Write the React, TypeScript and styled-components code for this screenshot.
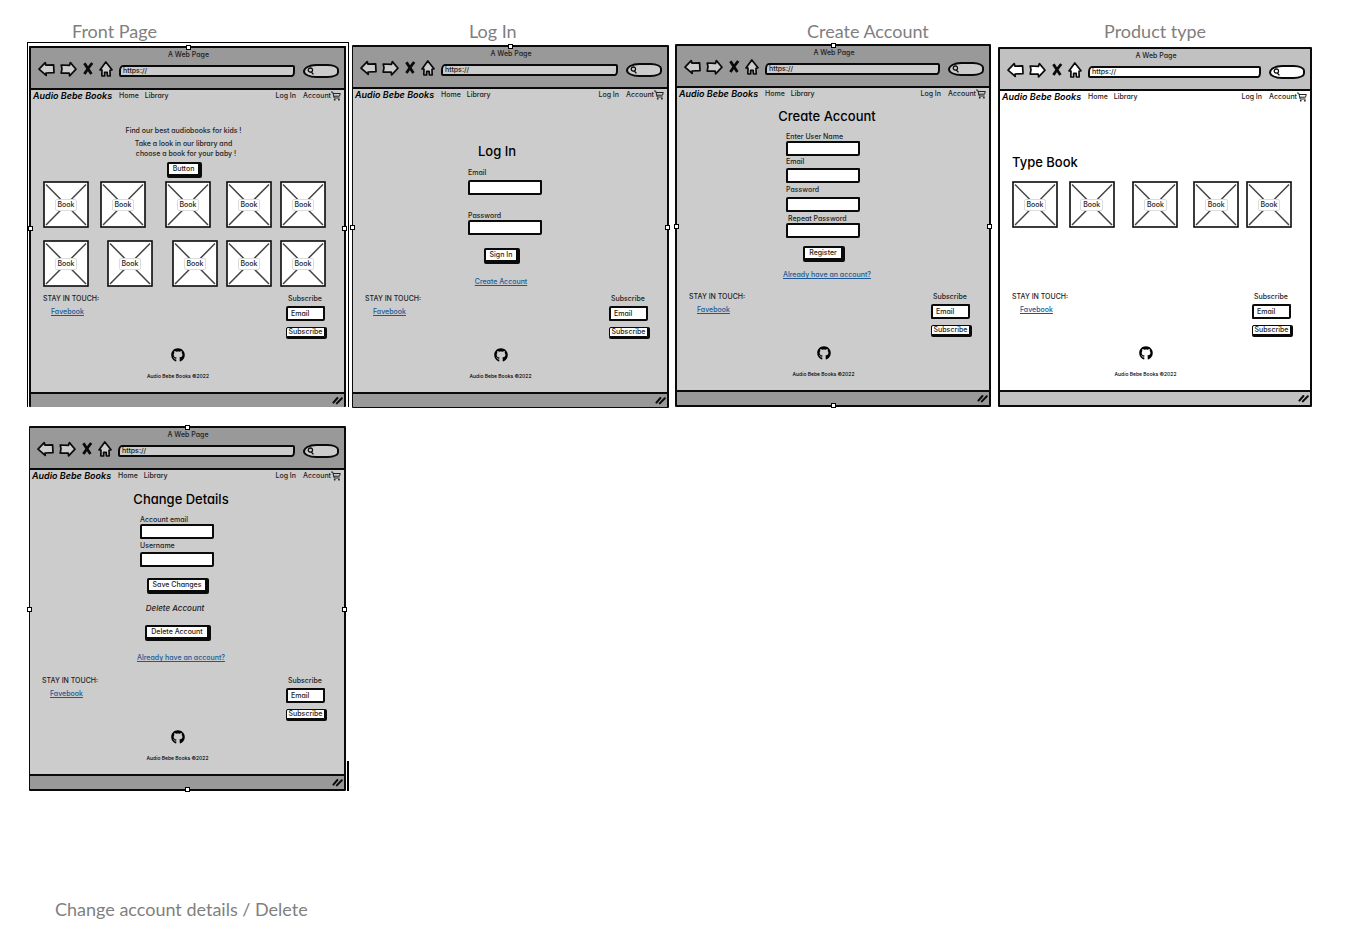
import React, { useId } from "react";
import styled, { createGlobalStyle } from "styled-components";
import { FaGithub } from "react-icons/fa";

const GlobalStyle = createGlobalStyle`
  * { box-sizing: border-box; }
  body { margin: 0; background: #fff; }
  h1, h2, h3, p { margin: 0; font-weight: inherit; }
  a { color: inherit; text-decoration: none; }
  button, input { font: inherit; color: inherit; margin: 0; }
`;

const Board = styled.main`
  display: grid;
  grid-template-columns: 325fr 323fr 323fr 314fr;
  padding: 21px 45px 0 27px;
`;

const Cell = styled.section<{ $right: number; $left?: number }>`
  padding: 0 ${(p) => p.$right}px 0 ${(p) => p.$left ?? 0}px;
`;

const Caption = styled.h2<{ $indent: number; $gap?: number }>`
  padding-left: ${(p) => p.$indent}px;
  margin-bottom: ${(p) => p.$gap ?? 0}px;
  font: 400 18px/20px Lato, "Open Sans", sans-serif;
  color: #7f7f7f;
  white-space: nowrap;
`;

const OuterFrame = styled.div`
  border: solid #000;
  border-width: 1px 1px 0 1px;
  padding: 3px 2px 0 1px;
`;

const Frame = styled.article<{ $light?: boolean; $top: number; $bottom: number; $side: number }>`
  position: relative;
  border: solid #0a0a0a;
  border-width: ${(p) => `${p.$top}px 2px ${p.$bottom}px ${p.$side}px`};
  border-radius: 1px;
  background: ${(p) => (p.$light ? "#fff" : "#ccc")};
  color: #1c1c1c;
  font: 500 7px/10px Inter, sans-serif;
  font-feature-settings: "cv11";
  --bar: ${(p) => (p.$light ? "#c1c1c1" : "#999")};
  --control: ${(p) => (p.$light ? "#fff" : "#ccc")};
`;

const Handle = styled.i<{ $at: "top" | "bottom" | "left" | "right" }>`
  position: absolute;
  width: 5px;
  height: 5px;
  border: 1px solid #000;
  background: #fff;
  ${(p) =>
    ({
      top: "top: -3px; left: calc(50% - 2px);",
      bottom: "bottom: -3px; left: calc(50% - 2px);",
      left: "left: -3px; top: calc(50% - 2px);",
      right: "right: -3px; top: calc(50% - 2px);",
    })[p.$at]}
`;

const Chrome = styled.header`
  background: var(--bar);
  border-bottom: 2px solid #0a0a0a;
  padding: 2px 5px 8px 7px;
`;

const ChromeTitle = styled.h3`
  font-size: 7px;
  line-height: 10px;
  text-align: center;
`;

const ToolRow = styled.div`
  display: flex;
  align-items: center;
  height: 20px;
  padding-top: 2px;
`;

const ToolIcons = styled.div`
  display: flex;
  align-items: center;
  gap: 5px;
  padding-bottom: 5px;
  margin-right: 6px;
`;

const IconButton = styled.button`
  display: flex;
  padding: 0;
  border: 0;
  background: none;
`;

const AddressInput = styled.input`
  flex: 1;
  min-width: 0;
  height: 12px;
  padding: 0 2px 1px;
  border: 2px solid #0a0a0a;
  border-radius: 4px 2px 3px 2px / 6px 2px 5px 2px;
  background: var(--control);
  outline: none;
`;

const SearchPill = styled.label`
  display: flex;
  align-items: center;
  width: 36px;
  height: 14px;
  margin-left: 8px;
  padding-left: 1px;
  border: 2px solid #0a0a0a;
  border-radius: 14px 12px 12px 14px / 8px 6px 6px 7px;
  background: var(--control);
`;

const SearchInput = styled.input`
  width: 20px;
  height: 8px;
  padding: 0;
  border: 0;
  background: none;
  outline: none;
`;

const Page = styled.div<{ $height: number }>`
  display: flex;
  flex-direction: column;
  min-height: ${(p) => p.$height}px;
`;

const Nav = styled.nav`
  display: flex;
  align-items: center;
  height: 12px;
  padding: 0 3px 0 2px;
`;

const Brand = styled.a`
  width: 86px;
  color: #000;
  font-size: 9px;
  font-style: italic;
  font-weight: 600;
  white-space: nowrap;
`;

const NavLink = styled.a<{ $gap?: number }>`
  margin-right: ${(p) => p.$gap ?? 0}px;
`;

const NavEnd = styled.div`
  display: flex;
  align-items: center;
  margin-left: auto;
`;

const Stack = styled.form<{ $right: number }>`
  display: flex;
  flex-direction: column;
  align-items: center;
  padding-right: ${(p) => p.$right}px;
`;

const Line = styled.p<{ $top?: number; $left?: number }>`
  margin-top: ${(p) => p.$top ?? 0}px;
  padding-left: ${(p) => p.$left ?? 0}px;
  white-space: nowrap;
`;

const Heading = styled.h1<{ $top: number; $left?: number; $right?: number }>`
  margin: ${(p) => `${p.$top}px ${p.$right ?? 0}px 0 ${p.$left ?? 0}px`};
  font-size: 13px;
  line-height: 18px;
  color: #000;
`;

const SubHeading = styled.h2`
  margin-top: 11px;
  margin-right: 4px;
  font-size: 8px;
  line-height: 10px;
  font-style: italic;
`;

const FieldBox = styled.div<{ $top: number; $gap: number; $left?: number; $indent?: number }>`
  display: flex;
  flex-direction: column;
  gap: ${(p) => p.$gap}px;
  width: 74px;
  margin-top: ${(p) => p.$top}px;
  margin-left: ${(p) => p.$left ?? 0}px;
  label {
    padding-left: ${(p) => p.$indent ?? 0}px;
    line-height: 8px;
    white-space: nowrap;
  }
`;

const TextInput = styled.input`
  width: 100%;
  height: 15px;
  padding: 0 3px;
  border: 2px solid #0a0a0a;
  border-radius: 2px 1px 2px 1px;
  background: #fff;
  outline: none;
  &::placeholder { color: #222; opacity: 1; }
`;

const PushButton = styled.button<{ $top?: number; $small?: boolean }>`
  height: ${(p) => (p.$small ? 10 : 14)}px;
  margin-top: ${(p) => p.$top ?? 0}px;
  padding: ${(p) => (p.$small ? "0" : "0 4px")};
  border: ${(p) => (p.$small ? "1px" : "2px")} solid #0a0a0a;
  border-radius: 2px 1px 1px 1px;
  box-shadow: 1px 1px 0 1px #0a0a0a;
  background: #fff;
  line-height: ${(p) => (p.$small ? 8 : 10)}px;
  white-space: nowrap;
`;

const TextLink = styled.a<{ $top?: number; $left?: number }>`
  margin-top: ${(p) => p.$top ?? 0}px;
  margin-left: ${(p) => p.$left ?? 0}px;
  color: #1b5a96;
  text-decoration: underline;
  white-space: nowrap;
`;

const Shelf = styled.div<{ $columns: string; $top: number }>`
  display: grid;
  grid-template-columns: ${(p) => p.$columns};
  margin-top: ${(p) => p.$top}px;
  padding: 0 18px 0 12px;
`;

const Tile = styled.div`
  display: grid;
  place-items: center;
  width: 46px;
  height: 47px;
  > * { grid-area: 1 / 1; }
`;

const TileLabel = styled.span`
  padding: 0 2px;
  border: 1px solid #dcdcdc;
  border-radius: 2px;
  background: #fff;
  line-height: 10px;
`;

const Footer = styled.footer`
  margin-top: auto;
`;

const FooterTop = styled.div`
  display: flex;
  justify-content: space-between;
  padding: 0 19px 0 12px;
`;

const Contact = styled.div`
  display: flex;
  flex-direction: column;
  gap: 3px;
`;

const Subscribe = styled.form`
  display: flex;
  flex-direction: column;
  align-items: stretch;
  width: 39px;
  label { padding-left: 2px; line-height: 10px; margin-bottom: 2px; }
`;

const Legal = styled.div`
  display: flex;
  flex-direction: column;
  align-items: center;
  padding-right: 19px;
  margin-top: 11px;
  height: 44px;
  font-size: 5px;
  color: #000;
  gap: 9px;
`;

const StatusBar = styled.div<{ $height: number }>`
  display: flex;
  justify-content: flex-end;
  align-items: center;
  height: ${(p) => p.$height}px;
  padding-right: 1px;
  border-top: 2px solid #0a0a0a;
  background: var(--bar);
`;

const WithRule = styled.div`
  display: flex;
  align-items: flex-end;
  gap: 1px;
  margin: 18px 0 108px;
  > article { flex: 1; }
`;

const Rule = styled.i`
  width: 2px;
  height: 30px;
  background: #000;
`;

const stroke = { fill: "var(--control)", stroke: "#0a0a0a", strokeWidth: 1.7, strokeLinejoin: "round" as const };

function BackIcon() {
  return (
    <svg width="17" height="16" viewBox="0 0 17 16">
      <path {...stroke} d="M1 8.2 7.2 1.6 8 4.2 15.6 3.8 16 11.6 8 12 8.2 14.4Z" />
    </svg>
  );
}

function ForwardIcon() {
  return (
    <svg width="17" height="16" viewBox="0 0 17 16">
      <path {...stroke} d="M16 8.2 10.4 1.6 9.4 4.4 1.2 4 2 7.6 1.2 12.2 9.2 12 9.6 14.8Z" />
    </svg>
  );
}

function StopIcon() {
  return (
    <svg width="12" height="16" viewBox="0 0 12 16">
      <path d="M2.4 2.2 5 6.2 9.4 13M10.200 2 6.4 7 2.4 13" fill="none" stroke="#0a0a0a" strokeWidth="2.8" />
    </svg>
  );
}

function HomeIcon() {
  return (
    <svg width="14" height="16" viewBox="0 0 14 16">
      <path {...stroke} d="M6.8 1 13 8.8 11 9.4 11.2 15 8.4 14.8 8.2 11.4 5.6 11.4 5.6 15 2.8 14.8 3 9.2 1 9Z" />
    </svg>
  );
}

function SearchIcon() {
  return (
    <svg width="8" height="8" viewBox="0 0 8 8">
      <path d="M4.3 1C6 1 6.6 2 6.5 3.3 6.3 4.7 5.3 5.3 4 5 2.6 4.7 2 3.7 2.3 2.6 2.5 1.6 3.3 1 4.3 1ZM5.4 5 7.4 7.4" fill="none" stroke="#0a0a0a" strokeWidth="1.3" />
    </svg>
  );
}

function CartIcon() {
  return (
    <svg width="10" height="10" viewBox="0 0 10 10">
      <path d="M0 1H1.7L3.2 7H8.6M2 2.5H9.3L8.5 5.2H2.7" fill="none" stroke="#222" strokeWidth="1" />
      <circle cx="3.7" cy="8.7" r=".9" fill="#222" />
      <circle cx="7.9" cy="8.7" r=".9" fill="#222" />
    </svg>
  );
}

function GripIcon() {
  return (
    <svg width="11" height="9" viewBox="0 0 11 9">
      <path d="M1.4 6.6 5.4 2M4.8 7.4 9.8 2.2" fill="none" stroke="#0a0a0a" strokeWidth="2" strokeLinecap="round" />
    </svg>
  );
}

function Book() {
  return (
    <Tile>
      <svg width="46" height="47" viewBox="0 0 46 47">
        <rect x="1" y="1" width="44" height="45" fill="#fff" stroke="#0a0a0a" strokeWidth="1.6" />
        <path d="M3 3.5 43 44M43 3.5 3 44" stroke="#444" strokeWidth="1.5" />
      </svg>
      <TileLabel>Book</TileLabel>
    </Tile>
  );
}

function BookRow({ columns, top }: { columns: string; top: number }) {
  return (
    <Shelf $columns={columns} $top={top}>
      {[0, 1, 2, 3, 4].map((i) => (
        <Book key={i} />
      ))}
    </Shelf>
  );
}

type FieldProps = { label: string; type?: string; top: number; gap?: number; left?: number; indent?: number };

function Field({ label, type = "text", top, gap = 0, left, indent }: FieldProps) {
  const id = useId();
  return (
    <FieldBox $top={top} $gap={gap} $left={left} $indent={indent}>
      <label htmlFor={id}>{label}</label>
      <TextInput id={id} type={type} />
    </FieldBox>
  );
}

type BrowserProps = {
  height: number;
  status: number;
  light?: boolean;
  top?: number;
  bottom?: number;
  side?: number;
  handles?: Array<"top" | "bottom" | "left" | "right">;
  children: React.ReactNode;
};

function Browser({ height, status, light, top = 2, bottom = 0, side = 2, handles = [], children }: BrowserProps) {
  const emailId = useId();
  return (
    <Frame $light={light} $top={top} $bottom={bottom} $side={side}>
      <Chrome>
        <ChromeTitle>A Web Page</ChromeTitle>
        <ToolRow>
          <ToolIcons>
            <IconButton type="button" aria-label="Back"><BackIcon /></IconButton>
            <IconButton type="button" aria-label="Forward"><ForwardIcon /></IconButton>
            <IconButton type="button" aria-label="Stop"><StopIcon /></IconButton>
            <IconButton type="button" aria-label="Home"><HomeIcon /></IconButton>
          </ToolIcons>
          <AddressInput aria-label="Address" defaultValue="https://" />
          <SearchPill>
            <SearchIcon />
            <SearchInput aria-label="Search" />
          </SearchPill>
        </ToolRow>
      </Chrome>
      <Page $height={height}>
        <Nav>
          <Brand href="#">Audio Bebe Books</Brand>
          <NavLink href="#" $gap={6}>Home</NavLink>
          <NavLink href="#">Library</NavLink>
          <NavEnd>
            <NavLink href="#" $gap={7}>Log In</NavLink>
            <NavLink href="#">Account</NavLink>
            <CartIcon />
          </NavEnd>
        </Nav>
        {children}
        <Footer>
          <FooterTop>
            <Contact>
              <span>STAY IN TOUCH:</span>
              <TextLink href="#" $left={8}>Favebook</TextLink>
            </Contact>
            <Subscribe>
              <label htmlFor={emailId}>Subscribe</label>
              <TextInput id={emailId} type="email" placeholder="Email" />
              <PushButton type="button" $small $top={6}>Subscribe</PushButton>
            </Subscribe>
          </FooterTop>
          <Legal>
            <FaGithub size={14} />
            <span>Audio Bebe Books ©2022</span>
          </Legal>
        </Footer>
      </Page>
      <StatusBar $height={status}>
        <GripIcon />
      </StatusBar>
      {handles.map((at) => (
        <Handle key={at} $at={at} />
      ))}
    </Frame>
  );
}

export default function App() {
  return (
    <>
      <GlobalStyle />
      <Board>
        <Cell $right={3}>
          <Caption $indent={45} $gap={1}>Front Page</Caption>
          <OuterFrame>
            <Browser height={302} status={15} handles={["top", "left", "right"]}>
              <Stack as="div" $right={8}>
                <Line $top={24}>Find our best audiobooks for kids !</Line>
                <Line $top={3}>Take a look in our library and</Line>
                <Line $left={5}>choose a book for your baby !</Line>
                <PushButton type="button" $top={3}>Button</PushButton>
              </Stack>
              <BookRow top={5} columns="57fr 65fr 61fr 54fr 46fr" />
              <BookRow top={12} columns="64fr 65fr 54fr 54fr 46fr" />
            </Browser>
          </OuterFrame>
        </Cell>

        <Cell $right={6}>
          <Caption $indent={117} $gap={4}>Log In</Caption>
          <Browser height={303} status={15} bottom={1} side={1} handles={["top", "left", "right"]}>
            <Stack $right={18}>
              <Heading $top={41} $right={8}>Log In</Heading>
              <Field label="Email" type="email" top={9} gap={3} left={8} />
              <Field label="Password" type="password" top={17} left={8} />
              <PushButton type="button" $top={13}>Sign In</PushButton>
              <TextLink href="#" $top={15}>Create Account</TextLink>
            </Stack>
          </Browser>
        </Cell>

        <Cell $right={7}>
          <Caption $indent={132} $gap={3}>Create Account</Caption>
          <Browser height={302} status={15} bottom={2} handles={["top", "left", "right", "bottom"]}>
            <Stack $right={20}>
              <Heading $top={7} $left={8}>Create Account</Heading>
              <Field label="Enter User Name" top={8} />
              <Field label="Email" type="email" top={2} gap={2} />
              <Field label="Password" type="password" top={3} gap={3} />
              <Field label="Repeat Password" type="password" top={3} indent={2} />
              <PushButton type="button" $top={8}>Register</PushButton>
              <TextLink href="#" $top={10} $left={8}>Already have an account?</TextLink>
            </Stack>
          </Browser>
        </Cell>

        <Cell $right={0}>
          <Caption $indent={106} $gap={6}>Product type</Caption>
          <Browser light height={299} status={15} bottom={2}>
            <Heading $top={50} $left={12}>Type Book</Heading>
            <BookRow top={10} columns="57fr 64fr 61fr 53fr 45fr" />
          </Browser>
        </Cell>

        <Cell $right={3} $left={2}>
          <WithRule>
            <Browser height={304} status={15} bottom={2} side={1} handles={["top", "left", "right", "bottom"]}>
              <Stack $right={20}>
                <Heading $top={8} $left={8}>Change Details</Heading>
                <Field label="Account email" type="email" top={8} />
                <Field label="Username" top={3} gap={2} />
                <PushButton type="button" $top={11}>Save Changes</PushButton>
                <SubHeading>Delete Account</SubHeading>
                <PushButton type="button" $top={12}>Delete Account</PushButton>
                <TextLink href="#" $top={14} $left={8}>Already have an account?</TextLink>
              </Stack>
            </Browser>
            <Rule />
          </WithRule>
          <Caption $indent={26}>Change account details / Delete</Caption>
        </Cell>
      </Board>
    </>
  );
}
